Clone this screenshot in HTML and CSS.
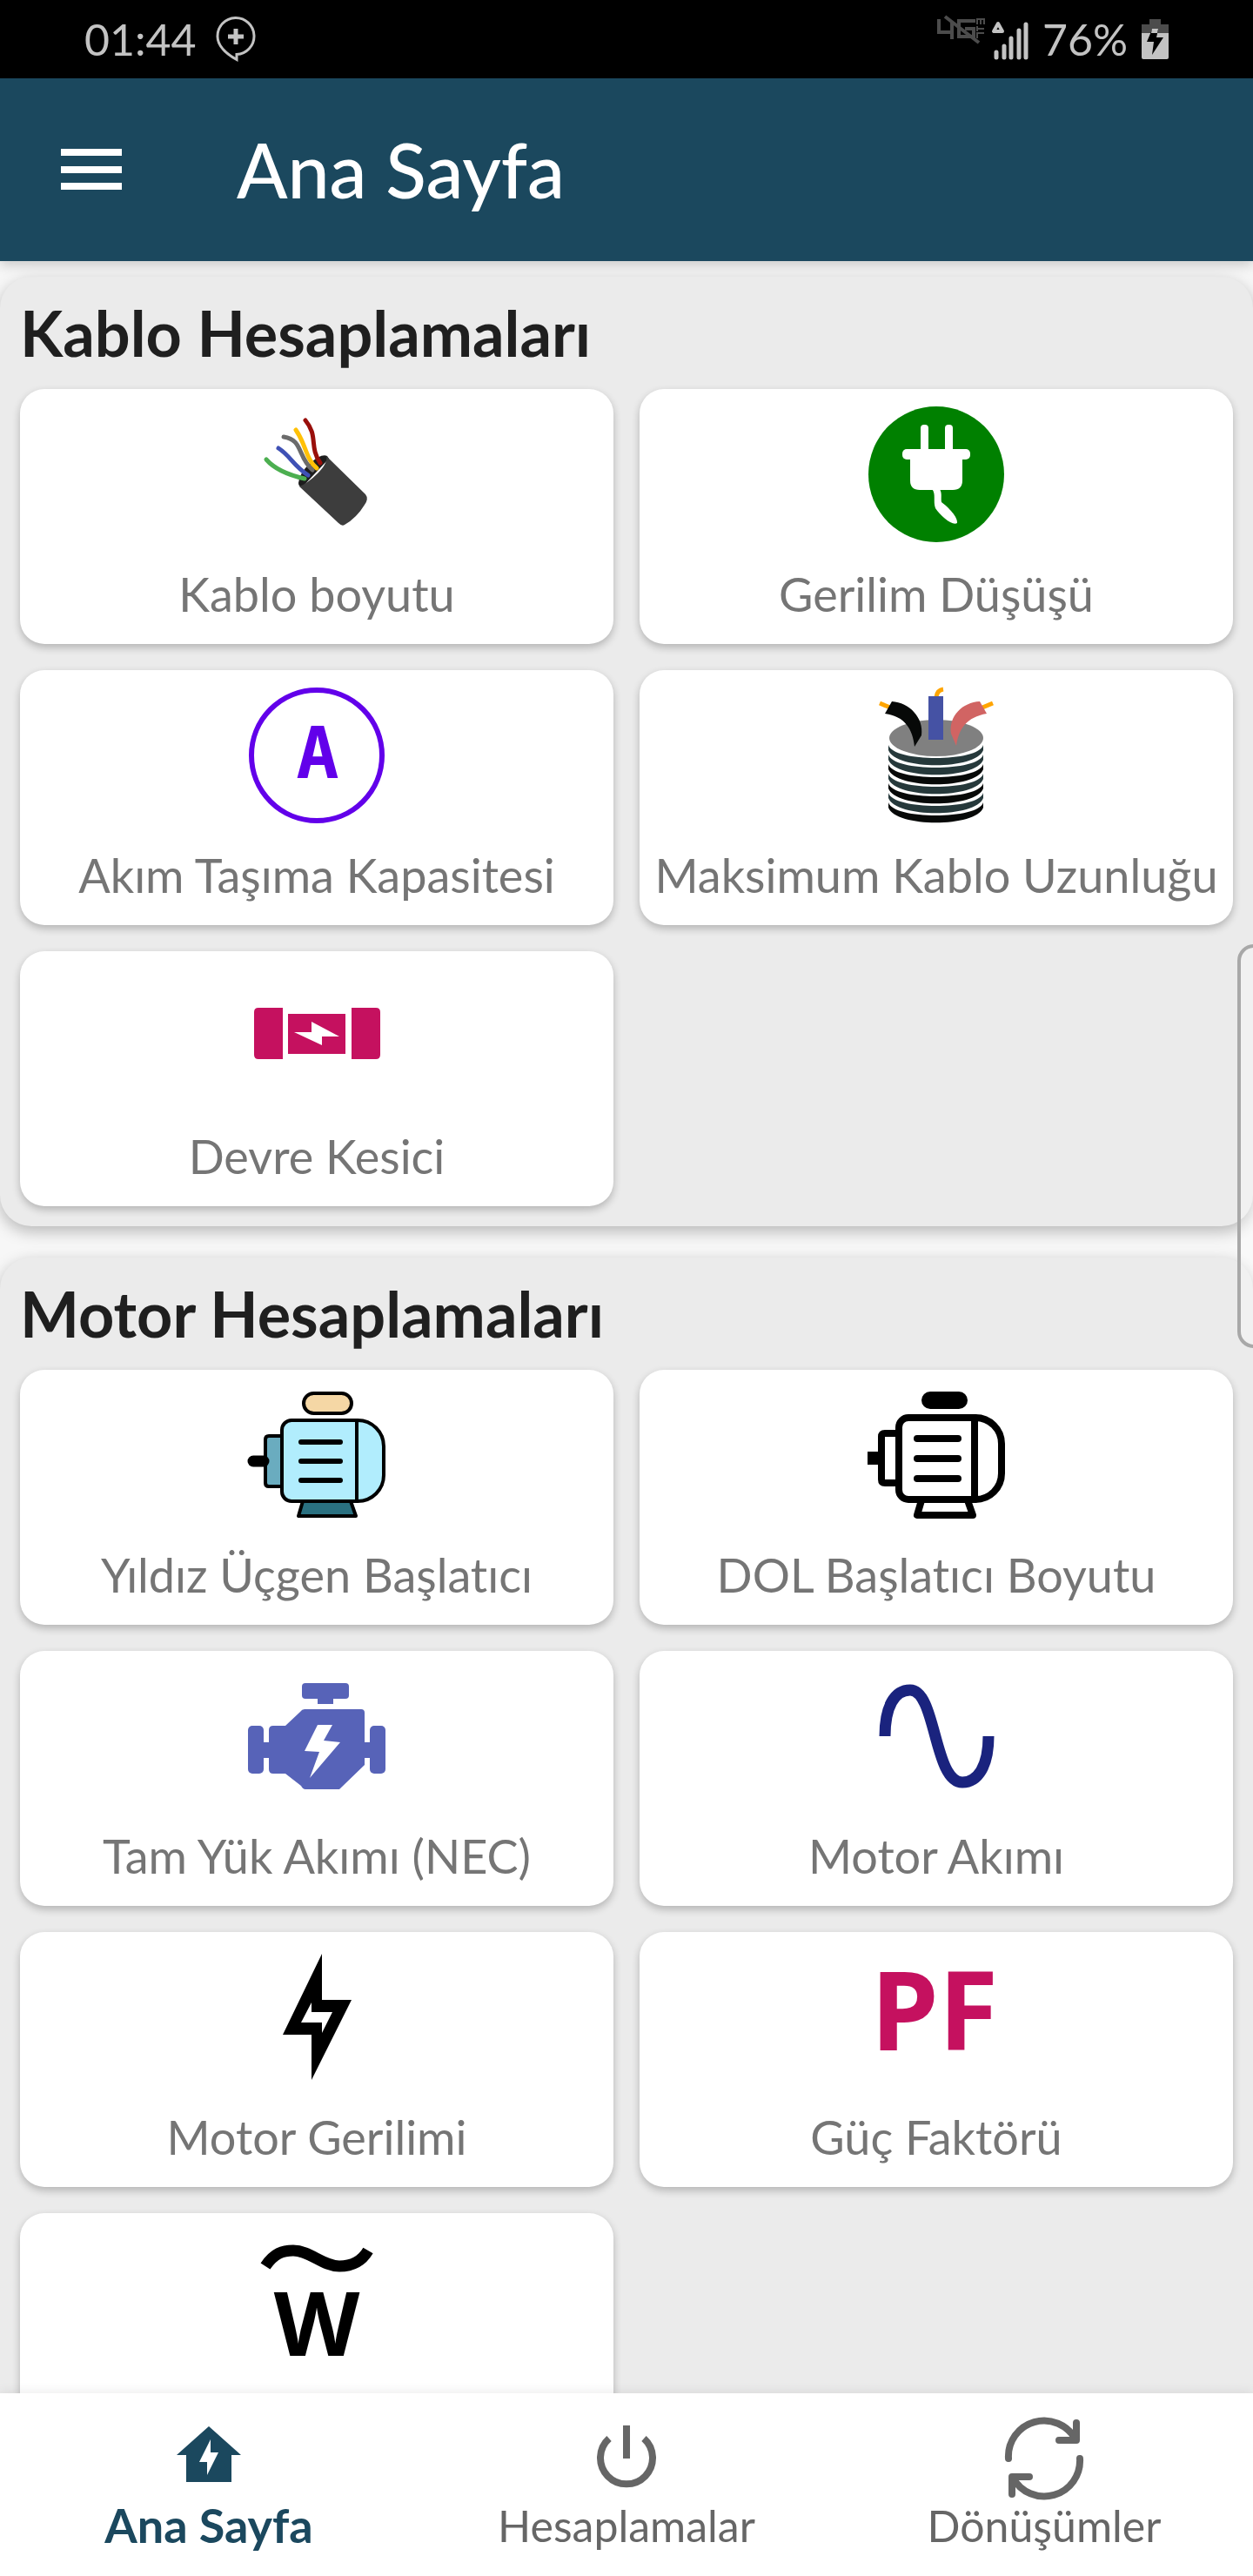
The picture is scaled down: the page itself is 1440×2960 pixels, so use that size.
FILE: index.html
```
<!DOCTYPE html>
<html lang="tr">
<head>
<meta charset="utf-8">
<meta name="viewport" content="width=device-width, initial-scale=1">
<title>Ana Sayfa</title>
<link rel="stylesheet" href="styles.css">
</head>
<body>
<div class="app">
  <div class="status">
    <div class="status-group">
      <span>01:44</span>
      <svg width="46" height="52" viewBox="0 0 46 52" fill="none" stroke="#c3c3c3" stroke-width="3"><path d="M24 49.500C9 41 2 33 2 23A21 21 0 1 1 24 43.500Z"/><path d="M23 14v18M14 23h18" stroke-width="5"/></svg>
    </div>
    <div class="status-group status-right">
      <svg width="106" height="52" viewBox="0 0 106 52" fill="none">
        <g stroke="#4c4c4c" stroke-width="4"><path d="M3 3v15h16M18 7v19M45 5H26v18h17V14H33"/><path d="M10 0l39 30"/><path d="M47 25v-6h8M47 14h8M47 17v-6M47 9V3h8v6M51 9V4" stroke-width="2"/></g>
        <path d="M71 8l-5 9h10z" stroke="#c3c3c3" stroke-width="4" stroke-linejoin="round"/>
        <path d="M69 41v6M78 34v13M86 25v22M95 16v31M103 9v38" stroke="#c3c3c3" stroke-width="5" stroke-linecap="round"/>
      </svg>
      <span>76%</span>
      <svg width="31" height="46" viewBox="0 0 31 46"><path d="M9 0h13v6h9v11H0V6h9z" fill="#4c4c4c"/><path d="M0 16h31v28q0 2-2 2H2q-2 0-2-2z" fill="#c3c3c3"/><path d="M12 12h7l-2 9h8L12 41l2-15H6z" fill="#000"/><path d="M12 11h7l-1 5h-7z" fill="#c3c3c3"/></svg>
    </div>
  </div>

  <header class="appbar">
    <button class="menu" type="button" aria-label="Menü"><svg width="70" height="48" viewBox="0 0 70 48" fill="#fff"><path d="M0 0h70v8H0zM0 20h70v8H0zM0 39h70v8H0z"/></svg></button>
    <h1>Ana Sayfa</h1>
  </header>

  <main class="content">
    <section class="panel">
      <h2>Kablo Hesaplamaları</h2>
      <div class="grid">
        <a class="card" href="#kablo-boyutu">
          <svg class="icon" viewBox="0 0 156 156">
            <path d="M57 88Q58 76 71 65Q83 54 90 57L92 60L61 93Q57 92 57 88Z" fill="#1c1c1c"/>
            <g fill="none" stroke-width="5" stroke-linecap="round"><path d="M20 61Q33 76 64 83" stroke="#4caf50"/><path d="M34 48C48 57 50 67 68 79" stroke="#3f51b5"/><path d="M40 35C62 38 56 58 73 73" stroke="#6b6b6b"/><path d="M54 27C66 44 65 60 78 71" stroke="#ffc107"/><path d="M65 16C80 34 69 46 82 65" stroke="#990f0b"/></g>
            <path d="M58 92Q68 88 79 77Q91 65 89 57L134 101Q138 106 133 113Q124 128 110 136Q107 138 103 134Z" fill="#3d3d3d"/>
          </svg>
          <span>Kablo boyutu</span>
        </a>
        <a class="card" href="#gerilim-dususu">
          <svg class="icon" viewBox="0 0 156 156">
            <circle cx="78" cy="78" r="78" fill="#008000"/>
            <g fill="#fff"><rect x="60" y="21" width="9" height="34" rx="4"/><rect x="88" y="21" width="9" height="34" rx="4"/><rect x="39" y="49" width="78" height="12" rx="5"/><path d="M48 58h60v27q0 11-11 11H59q-11 0-11-11z"/><path d="M73 95h9c3 5 1 10 2 15 8 6 19 17 18 24-5 4-19-8-25-17-3-8 1-17-4-22z"/></g>
          </svg>
          <span>Gerilim Düşüşü</span>
        </a>
        <a class="card" href="#akim-tasima">
          <svg class="icon" viewBox="0 0 156 156"><circle cx="78" cy="78" r="75" fill="none" stroke="#6200ea" stroke-width="6"/><text class="glyph-a" x="79" y="104">A</text></svg>
          <span>Akım Taşıma Kapasitesi</span>
        </a>
        <a class="card" href="#maksimum-uzunluk">
          <svg class="icon" viewBox="0 0 156 156">
            <defs><path id="coil" d="M23 66C28 86 127 86 132 66V72C124 95 31 95 23 72Z"/></defs>
            <ellipse cx="78" cy="58" rx="54" ry="21" fill="#808080"/>
            <g fill="#26393b"><use href="#coil"/><use href="#coil" y="11"/><use href="#coil" y="33"/><use href="#coil" y="55"/></g>
            <g fill="#070908"><use href="#coil" y="22"/><use href="#coil" y="44"/><use href="#coil" y="66"/></g>
            <g fill="none" stroke="#ffa500" stroke-width="5"><path d="M13 18l12 5M143 18l-12 5M78 11q1-8 8-9"/></g>
            <path d="M69 10h17v50H69z" fill="#4552a4"/>
            <path d="M27 16C47 17 64 35 61 55L53 68C51 48 42 33 19 30Z" fill="#070908"/>
            <path d="M128 16C108 17 92 33 95 53L101 67C104 47 113 34 136 30Z" fill="#d16463"/>
          </svg>
          <span>Maksimum Kablo Uzunluğu</span>
        </a>
        <a class="card" href="#devre-kesici">
          <svg class="icon" viewBox="0 0 156 156" fill="#c5115f"><path d="M39 45v59H11q-5 0-5-5V50q0-5 5-5zM118 45v59h28q5 0 5-5V50q0-5-5-5zM45 52h66v46H45z"/><path d="M72 61l32 17H84v10L52 73h20z" fill="#fff"/></svg>
          <span>Devre Kesici</span>
        </a>
      </div>
    </section>

    <section class="panel">
      <h2>Motor Hesaplamaları</h2>
      <div class="grid">
        <a class="card" href="#yildiz-ucgen">
          <svg class="icon" viewBox="0 0 156 156" stroke="#000" stroke-width="4" stroke-linejoin="round" stroke-linecap="round">
            <rect x="63" y="7" width="55" height="23" rx="11.500" fill="#f5d7a5"/>
            <path d="M38 56H23q-4 0-4 4v50q0 4 4 4h15z" fill="#6aacbf"/>
            <path d="M5 85h12" stroke-width="13"/>
            <path d="M62 131l-5 17h66l-6-17z" fill="#2a7080"/>
            <path d="M49 38h76a30 30 0 0 1 30 30v33a30 30 0 0 1-30 30H49a11 11 0 0 1-11-11V49a11 11 0 0 1 11-11z" fill="#b1edfd"/>
            <path d="M124 38v93"/><path d="M60 63h45M60 85h45M60 107h45" stroke-width="6"/>
          </svg>
          <span>Yıldız Üçgen Başlatıcı</span>
        </a>
        <a class="card" href="#dol">
          <svg class="icon" viewBox="0 0 156 156" fill="none" stroke="#000" stroke-width="8" stroke-linejoin="round" stroke-linecap="round">
            <rect x="61" y="5" width="53" height="20" rx="10" fill="#000" stroke="none"/>
            <path d="M-1 74h13v15H-1z" fill="#000" stroke="none"/>
            <path d="M35 53H19q-4 0-4 4v49q0 4 4 4h16"/>
            <path d="M46 35h77a30 30 0 0 1 30 30v34a30 30 0 0 1-30 30H46a11 11 0 0 1-11-11V46a11 11 0 0 1 11-11z"/>
            <path d="M122 35v94M56 59h47M56 82h47M56 105h47M61 130l-5 17h64l-6-17"/>
          </svg>
          <span>DOL Başlatıcı Boyutu</span>
        </a>
        <a class="card" href="#tam-yuk">
          <svg class="icon" viewBox="0 0 156 156" fill="#5763b8"><rect x="61" y="17" width="54" height="18" rx="4"/><path d="M79 33h18v8H79zM64 47h65q4 0 4 4v34h6v18h-6v8l-29 28H65q-3 0-5-4L42 121H28q-5 0-5-5v-13h-7V85h7V71q0-5 5-5h14l17-16q2-3 5-3z"/><rect x="-1" y="66" width="18" height="55" rx="5"/><rect x="139" y="66" width="18" height="55" rx="5"/><path d="M79 65h17L86 83l19 2-35 41 11-30-17-1z" fill="#fff"/></svg>
          <span>Tam Yük Akımı (NEC)</span>
        </a>
        <a class="card" href="#motor-akimi">
          <svg class="icon" viewBox="0 0 156 156"><path d="M19 78C19 44 30 25 48 25C78 25 75 131 108 131C126 131 138 112 138 78" fill="none" stroke="#1a237e" stroke-width="13"/></svg>
          <span>Motor Akımı</span>
        </a>
        <a class="card" href="#motor-gerilimi">
          <svg class="icon" viewBox="0 0 156 156"><path d="M84 5v53h34L72 150V98H39zM72 61L60 84h24v12l12-24H72z" fill-rule="evenodd"/></svg>
          <span>Motor Gerilimi</span>
        </a>
        <a class="card" href="#guc-faktoru">
          <svg class="icon" viewBox="0 0 156 156"><text class="glyph-pf" x="76" y="116">PF</text></svg>
          <span>Güç Faktörü</span>
        </a>
        <a class="card" href="#motor-gucu" aria-label="Motor gücü">
          <svg class="icon" viewBox="0 0 156 156"><path d="M19 41C29 26 39 23 51 23C70 23 85 41 104 41C119 41 130 35 137 23" fill="none" stroke="#000" stroke-width="13"/><text class="glyph-w" x="78" y="144">W</text></svg>
        </a>
      </div>
    </section>
    <div class="scroll-handle"></div>
  </main>

  <nav class="tabs">
    <a class="tab active" href="#ana"><svg width="90" height="90" viewBox="0 0 90 90"><path d="M45 8l37 33H71v31H19V41H8z" fill="#1b485e"/><path d="M47 23v15h9L43 64V49h-9z" fill="#fff"/></svg><span>Ana Sayfa</span></a>
    <a class="tab" href="#hesaplamalar"><svg width="90" height="90" viewBox="0 0 90 90" fill="none" stroke="#666" stroke-width="8"><path d="M45 7v38M25 22A30 30 0 1 0 65 22"/></svg><span>Hesaplamalar</span></a>
    <a class="tab" href="#donusumler"><svg width="90" height="90" viewBox="0 0 90 90" fill="none" stroke="#666" stroke-width="8" stroke-linecap="round" stroke-linejoin="round"><path d="M4 45A41 41 0 0 1 81 23M82 4v20H62M86 45A41 41 0 0 1 9 67M8 86V66h20"/></svg><span>Dönüşümler</span></a>
  </nav>
</div>
</body>
</html>
```
FILE: styles.css
```
* { box-sizing: border-box; }
body { margin: 0; background: #f7f7f7; font-family: Lato, "Open Sans", sans-serif; font-variant-ligatures: none; }
a { color: inherit; text-decoration: none; }
h1, h2 { margin: 0; }
svg { flex: none; overflow: visible; }

.app { display: flex; flex-direction: column; height: 100vh; }

.status { flex: none; display: flex; align-items: center; justify-content: space-between; height: 90px; padding: 0 97px; background: #000; color: #c3c3c3; font-size: 50px; }
.status-group { display: flex; align-items: center; gap: 22px; }
.status-right { gap: 16px; }

.appbar { flex: none; position: relative; z-index: 1; display: flex; align-items: center; gap: 132px; height: 210px; padding: 0 70px; background: #1b485e; color: #fff; box-shadow: 0 4px 14px rgba(0, 0, 0, .2); }
.menu { display: flex; padding: 0; border: 0; background: none; }
.appbar h1 { font-size: 86px; font-weight: 500; line-height: 100px; }

.content { position: relative; flex: 1; min-height: 0; overflow: hidden; padding-top: 18px; }
.panel { margin-bottom: 36px; padding: 0 23px 23px; border-radius: 36px; background: #ebebeb; box-shadow: 0 6px 18px rgba(0, 0, 0, .26); }
.panel h2 { color: #1f1f1f; font-size: 72px; line-height: 129px; }
.grid { display: grid; grid-template-columns: 1fr 1fr; gap: 30px; }

.card { display: flex; flex-direction: column; align-items: center; gap: 20px; height: 293px; padding-top: 20px; border-radius: 28px; background: #fff; color: #757575; font-size: 54px; line-height: 80px; white-space: nowrap; box-shadow: 0 4px 10px rgba(0, 0, 0, .24); }
.icon { width: 156px; height: 156px; }
.icon text { text-anchor: middle; font-weight: 700; }
.glyph-a { fill: #6200ea; font-family: "DejaVu Sans Mono", monospace; font-size: 82px; }
.glyph-pf { fill: #c5115f; font-family: "Noto Sans", sans-serif; font-size: 125px; }
.glyph-w { fill: #000; font-family: "Noto Sans", sans-serif; font-size: 102px; }

.scroll-handle { position: absolute; top: 785px; right: -20px; width: 38px; height: 464px; border: 4px solid #a8a8a8; border-radius: 20px; background: rgba(255, 255, 255, .3); }

.tabs { flex: none; position: relative; z-index: 1; display: grid; grid-template-columns: repeat(3, 1fr); height: 210px; padding-top: 30px; background: #fff; color: #666; box-shadow: 0 -2px 12px rgba(0, 0, 0, .08); }
.tab { display: flex; flex-direction: column; align-items: center; font-size: 50px; line-height: 64px; }
.active { color: #1b485e; font-size: 54px; font-weight: 700; }
```
